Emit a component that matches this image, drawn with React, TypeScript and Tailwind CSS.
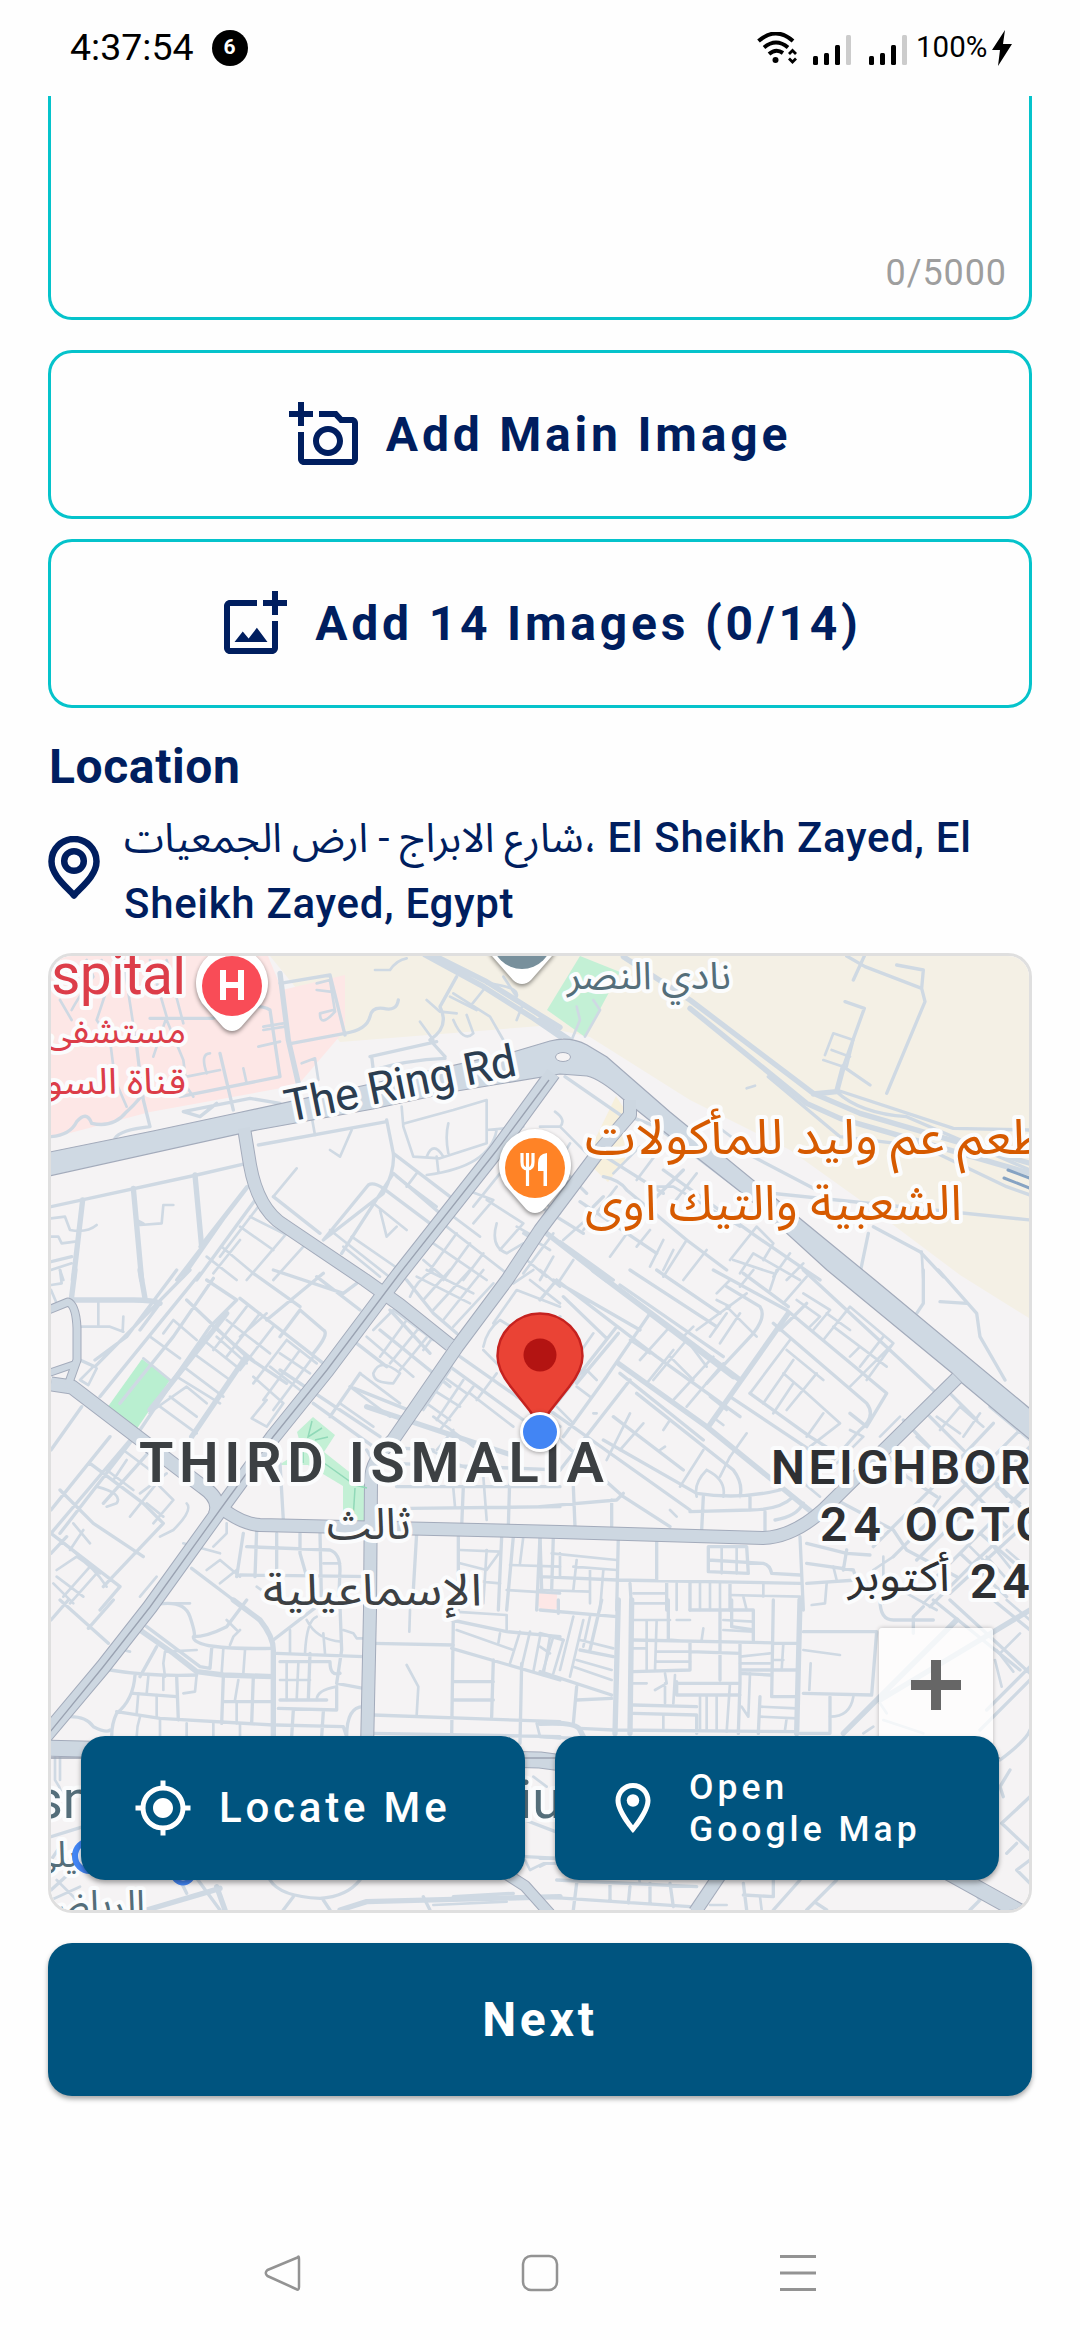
import React from "react";
import {
  MdOutlineAddAPhoto,
  MdOutlineAddPhotoAlternate,
  MdMyLocation,
  MdOutlineLocationOn,
} from "react-icons/md";

type Tile = { x: number; y: number; wide: string; mid: string; thin: string };

/* Street network, drawn tile by tile; three path units make one pixel. */
const tiles: Tile[] = [
  {
    x: 40,
    y: 940,
    wide: "M1155 45L1330 140L1480 235L1560 290M1180 45L1340 125L1500 225L1560 262M720 100L745 300L775 430M128 780L100 1020M280 745L305 1020M465 705L485 920",
    mid: "M33 590Q90 585 110 545Q140 510 155 550Q220 565 260 515Q300 480 330 430M0 480M33 800L470 705L620 670M720 130L870 105L915 285M755 310L915 280Q980 270 990 230Q995 200 1030 205Q1070 215 1075 180M990 350L1190 305M995 350L1000 390Q1100 360 1215 355M1040 540L1060 640Q1065 690 1030 760L850 900M1060 640L1230 770M655 615L1040 545M430 515L630 475L720 490M430 515L480 530L530 490M225 595Q240 570 330 560L310 480L290 320M420 470L720 410L690 210Q640 180 520 235L330 235M540 340L580 510M640 720L410 1020M660 760L470 1020M590 780L430 1010M1250 110L1200 200Q1230 260 1170 300L1215 350M700 770L840 880M33 965L95 950M850 900L985 735Q1000 725 1030 745L1170 850M905 940L1060 700L1200 820M480 920L620 740",
    thin: "M60 180L95 240M140 60L160 110Q110 180 95 210M185 60L200 150L170 240L210 300L225 420L260 500M250 60L290 320M330 60L380 230L340 350M380 240L430 360L440 440L460 470M380 60L430 250M440 410L540 390M500 400Q480 340 510 340M610 385L620 430M655 320L720 305M670 270L735 260M670 260L730 250M830 130L870 120L885 215Q840 265 840 220L880 210M830 150L870 155M1005 90L1050 90Q1070 60 1100 55M1160 180L1200 215L1250 220M1240 160L1350 230L1390 300M1330 150L1290 200M1230 170L1310 210M1450 190L1430 240M1140 245L1180 300M1280 225L1300 280Q1270 310 1240 240M1390 110L1430 170Q1440 140 1340 130M815 530L825 585M870 630L900 650L935 570M785 370L825 355L835 420L805 425M770 685L700 770M1085 500L1090 560L1120 650L1200 655L1340 610L1340 480L1240 510L1095 550M1225 550Q1215 590 1225 640M1160 650Q1180 600 1210 650M1160 705Q1350 680 1370 570M1340 570L1450 560M1190 650L1195 695M33 835L75 830L90 870Q140 880 170 855M33 890L55 890L65 910L105 905M33 990L95 970M400 795L370 795L365 850L300 855L290 840L310 850M60 990L70 1020M870 870L1060 1020M910 920L1020 1010M935 890L1080 990M1000 790L1100 870M1020 810L1040 890M1070 710L1190 800M1040 890L1070 860M600 860L700 930M630 830L730 880M500 950L590 1020M545 920L640 1000M670 780L540 950M740 880L620 1020M790 920L700 1020M600 900L520 1000M1300 800L1380 700L1560 820M1340 780L1450 850L1380 930M1280 750L1360 780L1300 850M1220 860L1400 1000M1240 830L1320 890M1180 910L1340 1020M1450 880L1530 930M1150 960L1220 1020M1250 880L1170 990M1290 910L1210 1020M1330 940L1270 1020M1370 850Q1350 920 1400 940L1450 910M1540 880L1450 1000M1430 860L1500 900M1460 960L1520 1010M1130 700L1100 740",
  },
  {
    x: 540,
    y: 940,
    wide: "M250 50L450 180L820 460L960 520L1470 670M450 205L800 490L900 535L1470 700M820 462L890 455L910 380M0 240L90 300M20 880L200 1020",
    mid: "M1070 75L1150 90L1145 145L975 80L920 48M1145 145L1155 185L1040 460M915 185L973 205L910 380L990 435M973 48L940 120M890 450L1240 565L1470 570M685 410L780 490L900 590L1150 620L1400 740L1470 765M890 455Q960 520 1100 530L1470 690M75 410L270 545M270 530L350 560L600 750L1470 840M620 640L830 750M1000 860L1140 935L1210 1010M985 880L960 1000M120 785L350 940M60 905L220 1020M80 700L140 760M0 800L130 880M190 710Q240 720 260 750L440 900L560 990M190 770L160 800M180 640L370 760M430 690L340 780M370 690L650 890L840 1020",
    thin: "M880 280L940 300L920 380M880 280L855 345M875 330L930 350M850 360L910 380M1145 935L1150 1020M45 515Q80 540 60 560L0 560M60 560L140 640M230 740L130 870M290 840L210 950M330 870L290 920M370 900L330 980M400 930L370 990M440 900L370 1010M600 860L400 740L350 740M470 700L400 790M570 960L650 860L700 910M580 960L700 1000M600 1000L640 940L780 1020M750 940L700 1010M700 910L670 960M790 970L740 1020M500 930L430 1020M160 820L70 900M90 610L60 660M40 950L0 1020M100 960L60 1020M620 445L645 437M95 300L120 240L110 200M160 180L180 210L135 290M520 550L600 610M350 640L290 720M300 620L220 700M0 660L70 700L90 750",
  },
  {
    x: 40,
    y: 1270,
    wide: "M100 90L280 90Q340 90 360 100M105 0L95 80M300 0L315 85M455 500L615 265M560 130L330 420M980 410L1430 560",
    mid: "M450 0L165 290L120 270M480 10L180 380M520 25L400 200L240 400M165 270L260 200L410 0M360 100L300 180M600 85L850 280M440 90L620 260L740 340M510 170L300 480L60 790M500 30L590 90L510 170L330 430M210 500L33 720M270 510L33 790M125 410L33 540M190 700L350 520M150 580L310 700L370 760L190 950M33 790L240 950L180 1020M60 660L160 760L310 860M820 400L1000 530L1180 540M1230 290L1450 450M870 440L960 310M1560 140L1430 380M1020 180L1230 350M930 350L1130 430M720 200L780 120L850 180Q870 190 820 250M950 220L1040 290M1060 580L1560 600M1060 580L1070 650L1560 650M1110 715L1560 710M1410 600L1405 770M1270 650L1265 770M620 830L870 840Q900 850 900 900L895 1020M455 895L620 1020M600 915L1000 920M590 920L610 790M710 790L710 920M780 790L780 850L800 920M840 790L845 1020M650 780L645 920M1130 790L1120 960M1255 800L1255 1020M1385 800L1375 1020M1420 800L1400 1020M1500 800L1490 1020M720 580L730 750M700 0L910 70L950 40M640 10L780 110M850 10L680 150M1260 260L1560 470M1010 590L980 540M830 20L960 120M33 850L80 800M720 300L1020 500M1100 30L1180 130L1250 190M1050 120L1170 250",
    thin: "M33 45L65 40L60 0M33 60L50 100M175 95L175 165M120 170L210 170L250 185M250 140L248 185M120 330L160 290M120 330L145 345L170 295M330 200L420 265M370 190L400 150L470 210M310 265L390 330M340 420L440 350L500 400M360 410L470 490M390 380L470 440M410 320L540 400M430 290L550 380M460 250L570 330M490 210L590 290M520 170L640 270M560 150L690 250M620 110L520 240M660 130L560 260M700 170L600 300M740 210L640 340M780 240L670 390M820 260L700 420M640 320L730 400L680 470L635 445L680 390M720 250L810 310M690 290L780 360M740 210L830 280M600 200L680 130M530 200L620 280M960 310L1080 400M930 350L1050 440M900 400L1000 470M980 200L1120 320M1000 180L1060 120L1180 210M1020 260L1100 150M1050 280L1140 170M1080 300L1170 190M1000 310Q1020 260 1080 310L1060 340Q1000 340 1000 310M1150 240L1180 200M1110 80Q1130 30 1180 0M1150 90L1230 0M1180 120L1290 0M1210 150L1330 0M1240 170L1360 40M1130 20L1290 100M1160 0L1300 70M1330 230Q1340 180 1380 150L1560 260M1360 160L1430 60L1560 110M1330 240L1400 310M1420 40L1480 0M1230 300L1150 420M1270 330L1190 450M1300 350L1200 480M1180 360L1260 410M1160 400L1230 450M1210 320L1280 370M1290 370L1420 470M1370 310L1310 390M250 540L330 600M200 600L280 660M220 630L260 570M170 650Q250 670 230 700L200 710M270 740L350 640L400 690L340 760M320 700L370 740M300 670L380 610M440 700Q460 720 400 780L360 800M100 760L150 820M60 810L180 910M130 780L90 840M50 900L110 860Q160 890 200 950M40 940L100 1000M70 980L150 890M90 1000L170 910M50 920L130 980M300 980L350 920M330 1000L370 940M520 830L560 790L560 760M500 900L540 870L600 920M540 940L590 900M1180 545L1330 620L1340 750M1240 655L1245 710M1260 840L1380 845L1340 900L1260 880M1410 885L1560 890M1270 930L1380 940M1400 960L1560 970M1340 840L1330 1000M1450 800L1440 880M430 820L540 850M850 880L900 880M650 950L720 1000M380 1000L450 1000M610 600L680 540M1180 440L1300 530M1240 480L1190 540M1470 30L1560 100M1500 0L1560 50",
  },
  {
    x: 540,
    y: 1270,
    wide: "M160 0L600 330M745 130L505 470M235 280L500 470L820 730M330 130L580 320",
    mid: "M50 30L350 260L600 440M40 30L300 180M70 80L200 205M0 90L50 30M240 45L550 260M270 0L530 170M350 0L540 130M520 0L740 120L1040 370L980 470L930 430M610 10L745 110M790 0L1190 370M700 160L980 400Q1010 440 960 480L880 570M570 380L870 580M630 370L810 500L890 550M800 100L720 180M560 50L660 110Q680 140 640 190L500 340M230 170L50 400L0 450M330 130L200 320L70 500M235 190L110 340M270 330L60 600M240 310L490 510M290 370L580 600Q610 640 600 680M220 440L430 600M190 510L470 670Q600 690 720 660M60 510L250 680L390 770M0 400L450 720M100 650L105 770M0 710L230 690L250 670M215 690L215 770M490 680L485 780M630 680L630 720L450 725M630 720Q720 720 760 680M675 725L675 790M705 750Q770 740 790 700M840 610L880 570M0 800L5 960M40 800L35 960M0 920L230 930L780 940M235 800L230 1020M350 810L350 930M505 830L620 830L625 910L505 905ZM505 870L670 880Q690 885 695 910L780 915M270 940L275 1020M380 940L380 1020M450 940L450 1020M570 940L570 1020M780 800L790 1020M800 820L920 850L990 855M800 880L940 900L950 930L800 940M920 840L910 900M1150 0L1150 100L1130 130M1195 0L1310 130L1320 200L1395 330M1200 95L1280 100M1090 450L1400 770M1160 430L1470 740M1230 370L1310 450M1350 410L1470 510M1020 530L1100 620L1190 680M890 690L1060 780L1100 840L1250 920M1000 830L1190 640L1360 460M1060 860L1440 480M1130 870L1300 700L1470 530M1190 920L1470 640M1230 970L1470 750M1170 1010L1300 880L1430 760M1260 850L1400 980M1320 790L1470 920",
    thin: "M0 240L90 330L140 300L170 330M160 190L90 290M110 350L150 380M50 410L100 460M170 430L160 430M270 210L330 250M300 270L390 170M340 330L440 210L500 290M390 260L460 330M400 390L520 260M440 410L550 280M400 240L320 340M460 170L430 200M540 220L600 130M470 180L620 70M510 200L560 130M530 90L570 110M650 200L560 110M530 70L570 30M640 0L600 50M710 0L690 60M730 100L800 20M770 90L840 140L810 170M790 70L870 120L820 180M850 210L930 110L1060 220L980 330M880 170L1040 290M860 130L930 180M960 230L930 260M1030 200L960 290M1060 220L930 350M750 210L630 370M760 270L670 400M740 240L850 330M760 340L700 430M830 310L740 420M800 370L900 460L810 530M850 430L800 500M730 310L800 370M510 380L560 420M530 450L550 465M370 480L390 450M360 540L375 530M310 460L240 540M270 430L200 570M490 540L420 650M570 560L540 620M620 490L570 560M500 600Q560 630 550 680M500 600Q460 640 470 680M780 630L840 680M820 600L860 640M930 480L970 500L890 580M1020 500L1080 440M1200 480L1260 410L1330 470M1190 440L1260 490M1270 500L1320 430M1130 500L1230 590M410 740L390 720M545 830L545 910M590 830L590 910M35 850L230 870M60 850L60 920M110 870L100 960M150 900L150 1000M0 960L150 965M190 900L180 1020M100 890L230 900M280 970L380 970M280 1000L380 1000M410 940L410 1020M480 940L480 1020M510 940L510 1020M540 940L540 1020M570 975L780 980M610 980L620 1020M670 940L670 980M860 940L855 1000L815 1005M880 890L890 930M1100 970L1190 1020M1000 900L1060 860M1370 650L1440 700M1320 590L1400 680M1200 680L1160 740M1030 860L1030 1000M1400 840L1470 900M1360 830L1440 930M1340 860L1430 960M1290 830L1360 900M1150 1000L1180 970",
  },
  {
    x: 40,
    y: 1600,
    wide: "M580 0L660 60Q700 110 700 150L700 410M300 90L400 160L470 215L550 225L700 230M530 860L555 930M900 930L980 905L1560 890M320 930L540 865",
    mid: "M60 0L205 130M145 85L220 0M33 60L85 0M320 20Q430 -10 450 50Q470 110 460 110Q500 110 560 80L620 0M460 110Q460 150 700 145M320 80L480 200L510 205L515 145M350 140L300 230M210 210Q330 230 470 225M285 225Q280 300 230 340Q215 370 215 410M280 280L410 290M230 335L360 355L700 375M550 230L545 370M640 230L635 370M410 230L415 360M550 305L700 305M700 120L830 20M720 185L870 185Q870 230 900 220M710 160L970 170M715 325L890 330L890 260M720 300L860 300M710 375L910 380L920 410M900 20L905 150L890 250L970 265M760 330L755 410M850 335L845 410M810 160L805 300M1000 130L1240 135M1240 60L1235 410M1235 145L1560 240M1235 60L1400 95L1560 110M1240 245L1360 245M1240 300L1360 300M1360 180L1355 350M1000 345L1560 365M1000 400L1560 410M1445 190L1440 430M90 350Q140 350 160 380Q200 400 210 390M920 410Q920 320 970 320M690 840Q720 890 840 895Q920 890 960 840M760 890L730 930M850 900L870 930M1240 890L1420 880M1150 890L1170 930M1455 770L1560 775M1455 660L1560 700M33 710L130 680M33 780L60 740M430 780L540 930M380 760L440 880M33 870L110 800",
    thin: "M250 150L270 155M370 230L370 270M325 230L320 280M295 280L290 340M350 285L350 350M300 350Q290 380 290 410M360 360L360 410M440 370L440 410M520 370L520 410M600 370L600 410M595 240L585 300M590 305L590 370M470 225L465 275L430 280M375 230L370 190L375 155L470 150M570 135L580 110L600 90M550 145L545 220M615 150L610 220M560 60L590 90M750 90L750 160M795 160Q800 60 830 50M800 60Q830 120 905 125M850 100L855 160M740 190L740 300M775 190L770 300M720 240L810 240M830 300Q830 270 890 260M910 90L940 100L950 115L970 115M1110 30L1108 95M1100 195L1135 260L1130 345M1250 90L1420 150M1380 100L1375 130M1440 95L1410 190M1470 95L1445 200M1500 110L1480 215M1530 110L1510 225M1490 370L1500 410L1560 415M1240 35L1400 45L1400 90M45 470L45 540Q60 560 65 580M60 470L60 540M33 900L120 860M50 840L110 900M1455 780L1470 810L1510 790L1560 790M1180 915L1400 905M1480 530L1520 560",
  },
  {
    x: 540,
    y: 1600,
    wide: "M235 0L225 400M275 0L270 400M780 0L770 400M910 400L1250 60M1020 300L1470 30M0 370Q110 365 120 390L130 410",
    mid: "M0 30L230 50M0 100L70 120M55 0L55 40M0 215L215 285M120 150L220 170M185 0L150 150M110 260L100 370M110 300L215 295M385 0L385 120L450 125L450 210L280 215M450 30L640 30L640 120M540 30L540 240M280 120L770 130M280 340L470 345L470 400M280 315L470 320M410 250L600 250L595 400M450 155L600 160L600 240M600 130L600 250M700 0L695 290L770 290M660 290L655 400M600 220L690 225M600 210L770 210M120 385L220 390L770 395M0 410L110 415M790 95L1010 95L995 285L790 280M870 290L870 400L780 400M575 0L575 80L640 90M410 245L410 285L600 285M1020 0Q1020 60 1060 60L1180 60M1360 0L1470 90M1230 0L1470 220M1180 0L1440 210M1150 20L1120 50L1120 100M1380 480Q1460 420 1470 390M1470 200L1340 330M1470 240L1320 390M0 775L50 775M50 840L470 860M0 890L450 920M210 850L210 900M110 850L100 930M270 860L265 910M330 850L330 910M390 850L400 920M700 840L700 890L610 885M780 840L700 930M890 840L800 930M610 850L620 930M1300 870L1320 900L1290 930M830 910L860 930M1410 510L1380 560L1390 590M1470 590L1385 670L1470 750M1400 760L1430 730M1470 780L1430 810L1470 850",
    thin: "M0 140L30 160M40 110L10 210M70 120L40 220M100 50L60 210M130 60L90 230M120 120L220 145M110 180L215 210M100 200L215 240M150 50L130 140M320 60L320 210M350 60L345 210M280 60L390 60M350 155L450 155M350 185L450 185M280 145L320 145M410 60L450 60M490 85L485 120M550 60L640 65M550 90L640 95M600 190L690 190M630 220L625 350L605 320M570 250L560 395M500 290L500 390M530 290L530 390M480 290L480 390M370 345L370 390M660 320L770 325M660 350L770 355M730 130L725 210M700 180L730 180M280 250L320 250M345 270L380 250L375 220M375 250L375 310M405 225L400 310M790 150L900 165M812 190L808 270M940 290Q930 350 870 350M740 355L735 390M1020 310L1040 340M1030 360L1150 400M1400 0L1470 60M1370 150L1420 215M1380 160L1440 100M600 170L690 160M970 400L1000 380M1365 180L1385 260M0 800L20 790L50 790M510 915L560 915M290 800L300 850M660 890L665 930",
  },
];

/* Trunk roads, in page pixels. */
const trunks = [
  { d: "M553 1073L497 1150L400 1273L387 1290L327 1370L273 1437L222 1507L150 1607L103 1667L40 1742", w: 14 },
  { d: "M244 1128L250 1165Q258 1210 285 1226L365 1280L400 1305L450 1345", w: 12 },
  { d: "M630 1100L630 1115L600 1150L540 1230L507 1280L457 1347L393 1440Q371 1460 371 1480L370 1610L367 1750", w: 12 },
  { d: "M215 1503Q240 1524 260 1525L560 1532L763 1538Q793 1537 823 1510L957 1378", w: 12 },
  { d: "M51 1384L72 1387L203 1487Q222 1500 215 1515", w: 13 },
  { d: "M46 1311L68 1302Q76 1305 77 1328L77 1360L67 1388", w: 7 },
  { d: "M46 1374L75 1364", w: 6 },
  { d: "M40 1748L540 1760L600 1768L800 1790L1020 1912", w: 15 },
  { d: "M730 1860L695 1912", w: 12 },
  { d: "M500 1870L525 1886L550 1914", w: 10 },
];

const ring =
  "M40 1154L153 1131L237 1113L357 1087L513 1052L550 1041Q570 1036 587 1045L607 1057L670 1112L875 1280L1040 1417L1040 1448L962 1383L952 1373L827 1270L747 1197L653 1123L623 1099Q600 1079 587 1076L560 1074L457 1091L373 1109L257 1130L40 1178Z";

function MapPin({ x, y, color, children }: { x: number; y: number; color: string; children?: React.ReactNode }) {
  return (
    <g transform={`translate(${x} ${y})`}>
      <path
        d="M0 45Q-5 45 -9 41L-30 17A36 36 0 1 1 30 17L9 41Q5 45 0 45Z"
        fill="#fff"
        className="drop-shadow-[0_2px_2px_rgba(0,0,0,0.45)]"
      />
      <circle r="30" fill={color} />
      {children}
    </g>
  );
}

type LabelProps = {
  x: number;
  y: number;
  size: number;
  color: string;
  children: string;
  width?: number;
  anchor?: "start" | "middle" | "end";
  weight?: number;
  rtl?: boolean;
  rotate?: number;
};

function Label({ x, y, size, color, children, width, anchor = "start", weight = 400, rtl, rotate = 0 }: LabelProps) {
  return (
    <text
      x={x}
      y={y}
      fontSize={size}
      fontWeight={weight}
      fill={color}
      stroke="#fbfcfd"
      strokeWidth="8"
      strokeLinejoin="round"
      paintOrder="stroke"
      textAnchor={anchor}
      textLength={width}
      lengthAdjust={rtl ? "spacingAndGlyphs" : "spacing"}
      transform={rotate ? `rotate(${rotate} ${x} ${y})` : undefined}
    >
      {children}
    </text>
  );
}

function CityMap() {
  return (
    <svg viewBox="51 956 978 954" className="block h-full w-full font-[Roboto,'Noto_Sans_Arabic','Noto_Sans','DejaVu_Sans',sans-serif]">
      <rect x="51" y="956" width="978" height="954" fill="#f5f3f4" />
      <path d="M270 956L1029 956L1029 1318L960 1275L860 1200L790 1150L690 1100L590 1037L540 1026L340 1042Z" fill="#f4f0e5" />
      <path d="M51 956L268 956L282 990L345 975L345 1030L298 1085L150 1112L51 1138Z" fill="#fde7e6" />
      <path d="M580 956L620 972L585 1037L547 1010Z" fill="#c3f0d5" />
      <path d="M616 1096L625 1110L625 1160L608 1182L585 1160Z" fill="#f7f0dc" />
      <path d="M142 1359L170 1380L136 1430L107 1408Z" fill="#b9efd0" />
      <path d="M313 1417L335 1435L324 1452L367 1486L367 1521L343 1521L343 1486L308 1465L279 1465L302 1450L297 1432Z" fill="#c3f0d5" />
      <path d="M538 1592L557 1592L557 1608Q545 1617 538 1605Z" fill="#fde7e6" />
      {tiles.map((t) => (
        <g
          key={`${t.x}-${t.y}`}
          transform={`translate(${t.x} ${t.y}) scale(0.33333)`}
          fill="none"
          stroke="#cfd9e3"
          strokeLinecap="round"
          strokeLinejoin="round"
        >
          <path d={t.thin} strokeWidth="8" />
          <path d={t.mid} strokeWidth="10" />
          <path d={t.wide} strokeWidth="16" />
        </g>
      ))}
      <g fill="none" stroke="#a3abbb" strokeLinejoin="round">
        {trunks.map((r) => (
          <path key={r.d} d={r.d} strokeWidth={r.w + 2} />
        ))}
      </g>
      <path d={ring} fill="#cfd9e3" stroke="#a3abbb" strokeWidth="1.2" />
      <g fill="none" stroke="#cdd7e1" strokeLinejoin="round">
        {trunks.map((r) => (
          <path key={r.d} d={r.d} strokeWidth={r.w} />
        ))}
      </g>
      <path d="M549 1080L497 1150L400 1273L327 1370L273 1437L222 1507L150 1607L103 1667L45 1738M51 1758L1000 1758" fill="none" stroke="#9aa2b1" strokeWidth="1.3" />
      <path d="M312 1421L308 1437L322 1428M315 1440L328 1437M324 1463L355 1485L367 1488M355 1488L353 1520M303 1452V1463" fill="none" stroke="#90d9b8" strokeWidth="1.5" />
      <ellipse cx="563" cy="1057" rx="7.5" ry="4.5" fill="#f5f3f4" stroke="#a3abbb" />
      <path d="M1008 1170L1032 1179M1004 1178L1032 1189" stroke="#86a3c3" strokeWidth="3" strokeLinecap="round" />

      <Label x={51} y={994} size={57} color="#dc3d49" width={135}>spital</Label>
      <Label x={186} y={1043} size={36} color="#dc3d49" anchor="end" rtl width={141}>مستشفى</Label>
      <Label x={186} y={1094} size={36} color="#dc3d49" anchor="end" rtl width={141}>قناة السو</Label>
      <Label x={288} y={1122} size={45} color="#2b3d50" width={235} rotate={-11.5}>The Ring Rd</Label>
      <Label x={731} y={989} size={38} color="#546e7a" anchor="end" rtl width={164}>نادي النصر</Label>
      <Label x={1047} y={1154} size={49} color="#d65a00" anchor="end" weight={450} rtl width={462}>طعم عم وليد للمأكولات</Label>
      <Label x={962} y={1220} size={49} color="#d65a00" anchor="end" weight={450} rtl width={377}>الشعبية والتيك اوى</Label>

      <MapPin x={232} y={986} color="#f94c57">
        <path d="M-9 -16V14M9 -16V14M-9 -1H9" stroke="#fff" strokeWidth="6" fill="none" />
      </MapPin>
      <MapPin x={522} y={939} color="#78909c" />
      <MapPin x={535} y={1168} color="#ff8326">
        <path d="M-13 -15V-6Q-13 1 -7.500 1Q-2 1 -2 -6V-15M-7.500 -15V18" stroke="#fff" strokeWidth="3.200" fill="none" />
        <path d="M12 -15V18H8.500V3H3V-5Q3 -14 12 -15Z" fill="#fff" />
      </MapPin>

      <Label x={139} y={1482} size={56} color="#3c4043" weight={600} width={465}>THIRD ISMALIA</Label>
      <Label x={411} y={1539} size={44} color="#3c4043" anchor="end" rtl width={84}>ثالث</Label>
      <Label x={482} y={1605} size={44} color="#3c4043" anchor="end" rtl width={219}>الإسماعيلية</Label>
      <Label x={771} y={1484} size={48} color="#2e3033" weight={600} width={297}>NEIGHBORH</Label>
      <Label x={820} y={1541} size={48} color="#2e3033" weight={600} width={265}>24 OCTOB</Label>
      <Label x={970} y={1598} size={48} color="#2e3033" weight={600} width={60}>24</Label>
      <Label x={950} y={1591} size={42} color="#2e3033" anchor="end" rtl width={102}>أكتوبر</Label>
      <Label x={35} y={1818} size={54} color="#546e7a">sma</Label>
      <Label x={519} y={1818} size={54} color="#546e7a">ium</Label>
      <Label x={78} y={1867} size={36} color="#546e7a" anchor="end" rtl>يلي</Label>
      <Label x={145} y={1917} size={38} color="#546e7a" anchor="end" rtl>الرياض</Label>
      <circle cx="90" cy="1856" r="15" fill="#e5eefb" stroke="#4285f4" strokeWidth="6" />
      <circle cx="183" cy="1873" r="10" fill="#e5eefb" stroke="#4285f4" strokeWidth="5" />

      <path
        d="M536 1420L530 1411L511 1387Q497.500 1370 497.500 1356A42.500 42.500 0 0 1 582.500 1356Q582.500 1370 569 1387L550 1411L544 1420Z"
        fill="#ea4335"
        stroke="#c5221f"
        strokeWidth="2.500"
      />
      <circle cx="540" cy="1355" r="16.500" fill="#b31412" />
      <circle cx="540" cy="1432" r="20" fill="#fff" className="drop-shadow-[0_1px_2px_rgba(0,0,0,0.35)]" />
      <circle cx="540" cy="1432" r="17" fill="#4285f4" />
    </svg>
  );
}

function StatusBar() {
  return (
    <header className="flex h-24 shrink-0 items-center justify-between pr-[68px] pl-[70px] text-black">
      <div className="flex items-center gap-[18px]">
        <span className="text-[37.500px] leading-none">4:37:54</span>
        <span className="flex size-[36px] items-center justify-center rounded-full bg-black text-[21px] font-bold text-white">6</span>
      </div>
      <div className="flex items-center">
        <svg viewBox="0 0 40 32" className="h-8 w-10" fill="none" stroke="#000" strokeWidth="4">
          <path d="M1.500 9Q19 -6 36 9M7 15.500Q19 5.500 31 15.500M12 22Q19 16 26 21" />
          <circle cx="18.500" cy="28" r="3" fill="#000" stroke="none" />
          <path d="M32 22L35.500 18.500L39 22M32 26.500L35.500 30L39 26.500" strokeWidth="2.800" />
        </svg>
        <svg viewBox="0 0 38 30" className="mt-[3px] ml-[16px] h-[30px] w-[38px]">
          <rect x="0" y="21" width="5" height="9" rx="1.500" />
          <rect x="11" y="18" width="5" height="12" rx="1.500" />
          <rect x="22" y="10" width="5" height="20" rx="1.500" />
          <rect x="33" y="0" width="5" height="30" rx="1.500" fill="#ccc" />
        </svg>
        <svg viewBox="0 0 38 30" className="mt-[3px] ml-[18px] h-[30px] w-[38px]">
          <rect x="0" y="21" width="5" height="9" rx="1.500" />
          <rect x="11" y="18" width="5" height="12" rx="1.500" />
          <rect x="22" y="10" width="5" height="20" rx="1.500" />
          <rect x="33" y="0" width="5" height="30" rx="1.500" fill="#ccc" />
        </svg>
        <span className="ml-[9px] w-[72px] text-[29.500px] leading-none font-[450]">100%</span>
        <svg viewBox="0 0 20 36" className="ml-1 h-9 w-5">
          <path d="M13 0L0 20H8L6 36L20 14H11Z" />
        </svg>
      </div>
    </header>
  );
}

function ImageButton({ icon, label }: { icon: React.ReactNode; label: string }) {
  return (
    <button className="flex h-[169px] shrink-0 items-center justify-center gap-[25px] rounded-[24px] border-3 border-[#05c3cb] text-[48px] leading-none font-bold tracking-[3.800px] text-[#001e5f]">
      {icon}
      <span>{label}</span>
    </button>
  );
}

export default function App() {
  return (
    <div className="flex h-[2340px] w-[1080px] flex-col overflow-hidden bg-[#fefefe] font-[Roboto,'Noto_Sans_Arabic','Noto_Sans','DejaVu_Sans',sans-serif]">
      <StatusBar />
      <main className="flex flex-col px-12">
        <div className="flex h-[224px] items-end justify-end rounded-b-[24px] border-x-3 border-b-3 border-[#05c3cb] pr-[22px] pb-[26px]">
          <span className="text-[36px] leading-none tracking-[0.900px] text-[#9e9e9e]">0/5000</span>
        </div>
        <div className="mt-[30px] flex flex-col gap-5">
          <ImageButton icon={<MdOutlineAddAPhoto className="size-[72px]" />} label="Add Main Image" />
          <ImageButton icon={<MdOutlineAddPhotoAlternate className="size-[72px]" />} label="Add 14 Images (0/14)" />
        </div>
        <h2 className="mt-[35px] pl-[1px] text-[48px] leading-[48px] font-bold tracking-[0.600px] text-[#001e5f]">Location</h2>
        <div className="mt-[14px] flex h-[132px] items-center gap-6 text-[#001e5f]">
          <svg viewBox="0 0 52 64" className="mt-[-7px] h-16 w-[52px] shrink-0" fill="none" stroke="currentColor" strokeWidth="6.500">
            <path d="M26 59.500C20 52 3.500 40 3.500 25.500A22.500 22.500 0 0 1 48.500 25.500C48.500 40 32 52 26 59.500Z" strokeLinejoin="round" />
            <circle cx="26" cy="25" r="9.800" />
          </svg>
          <p className="text-[42px] leading-[66px] font-medium tracking-[0.700px] whitespace-nowrap">
            <span className="text-[40.600px] font-normal tracking-normal">شارع الابراج - ارض الجمعيات،</span> El Sheikh Zayed, El
            <br />
            Sheikh Zayed, Egypt
          </p>
        </div>
        <section className="relative mt-[16px] h-[960px] overflow-hidden rounded-[24px] border-3 border-[#dfdfdf]">
          <CityMap />
          <button className="absolute top-[672px] left-[828px] flex h-[120px] w-[114px] justify-center rounded-[3px] bg-white/75 pt-[32px] shadow-[0_0_4px_rgba(0,0,0,0.25)]">
            <svg viewBox="0 0 50 50" className="size-[50px]">
              <path d="M20 0H30V20H50V30H30V50H20V30H0V20H20Z" fill="#666" />
            </svg>
          </button>
          <div className="absolute inset-x-[30px] bottom-[30px] flex h-36 gap-[30px] text-white">
            <button className="flex w-[444px] items-center rounded-[24px] bg-[#00547f] pl-[52px] text-left text-[42px] leading-none font-medium tracking-[3.800px] shadow-[0_3px_5px_rgba(0,0,0,0.35)]">
              <MdMyLocation className="size-[60px]" />
              <span className="ml-[26px]">Locate Me</span>
            </button>
            <button className="flex w-[444px] items-center rounded-[24px] bg-[#00547f] pl-[48px] text-left text-[35.500px] leading-[42px] font-medium tracking-[4px] shadow-[0_3px_5px_rgba(0,0,0,0.35)]">
              <MdOutlineLocationOn className="size-[60px]" />
              <span className="ml-[26px]">
                Open
                <br />
                Google Map
              </span>
            </button>
          </div>
        </section>
        <button className="mt-[30px] h-[153px] rounded-[24px] bg-[#00547f] text-[48px] leading-none font-bold tracking-[3.800px] text-white shadow-[0_3px_5px_rgba(0,0,0,0.35)]">
          Next
        </button>
      </main>
      <nav className="mt-auto mb-[47px] flex h-10 items-center justify-around px-[153px]">
        <svg viewBox="0 0 40 40" className="size-10" fill="none" stroke="#939393" strokeWidth="2.500">
          <path d="M35.500 4.500Q37 2 37 6V34Q37 38 34 36L5.500 23Q2 20 5.500 17Z" strokeLinejoin="round" />
        </svg>
        <svg viewBox="0 0 40 40" className="size-10" fill="none" stroke="#939393" strokeWidth="2.500">
          <rect x="3" y="3" width="34" height="34" rx="8" />
        </svg>
        <svg viewBox="0 0 40 40" className="size-10" stroke="#939393" strokeWidth="3">
          <path d="M2 3.500H38M2 20H38M2 36.500H38" />
        </svg>
      </nav>
    </div>
  );
}
